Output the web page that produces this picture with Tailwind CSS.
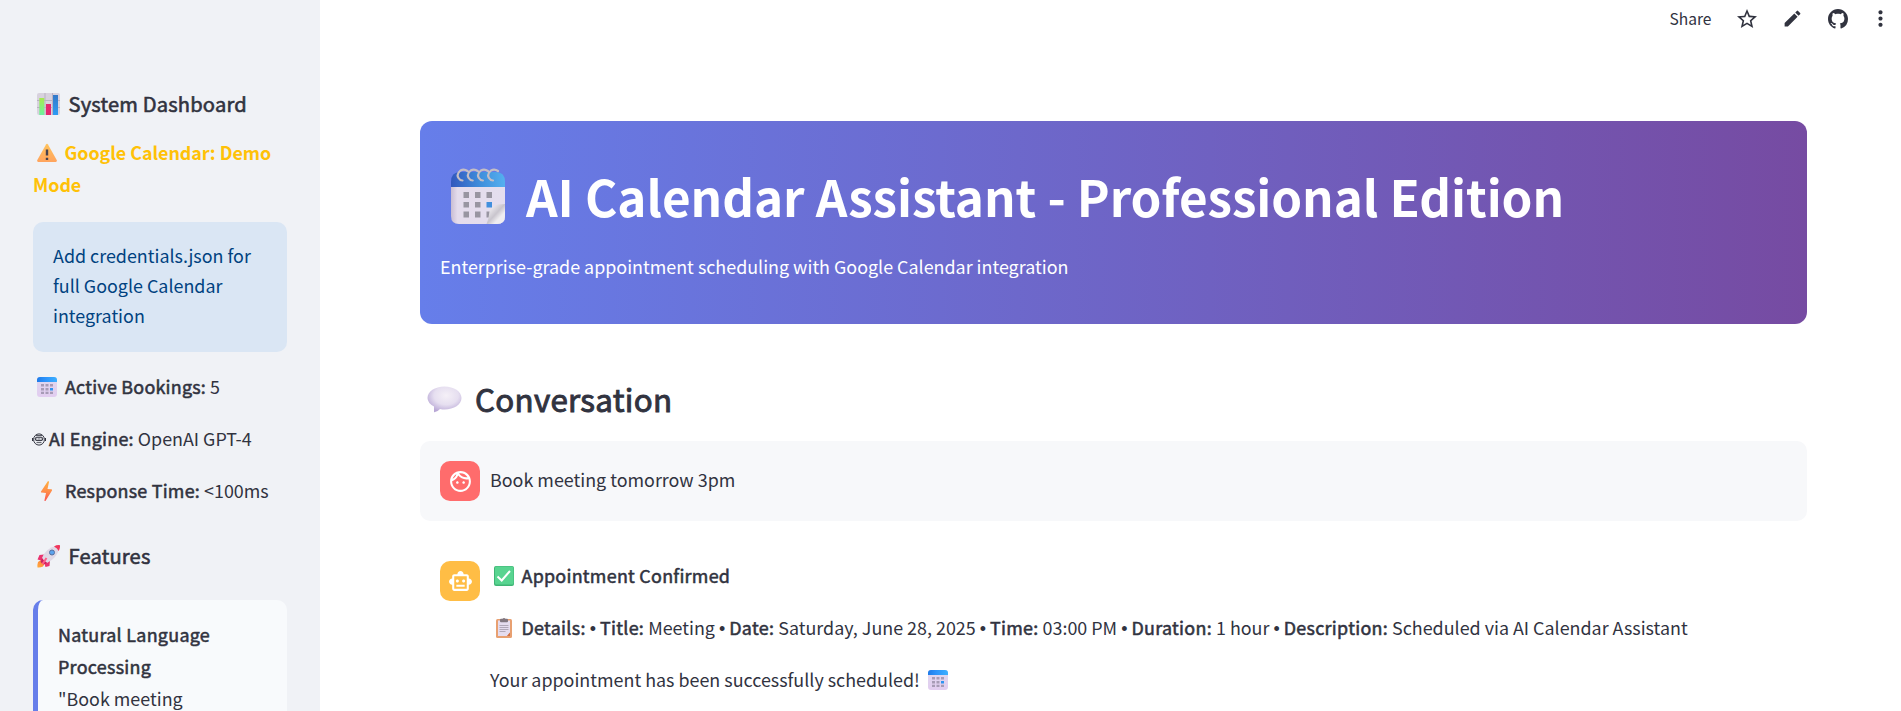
<!DOCTYPE html>
<html lang="en">
<head>
<meta charset="utf-8">
<title>AI Calendar Assistant</title>
<script src="https://cdn.jsdelivr.net/npm/@tailwindcss/browser@4"></script>
</head>
<body class="h-[711px] w-[1901px] overflow-hidden bg-white font-['Noto_Sans_CJK_SC',sans-serif] text-[17.9px] text-[#31333f]">
<svg class="absolute size-0" aria-hidden="true">
  <defs>
    <linearGradient id="blueTop" x1="0" x2="1"><stop offset="0" stop-color="#1f7be8"/><stop offset=".4" stop-color="#2c92fa"/><stop offset="1" stop-color="#3cb0ff"/></linearGradient>
    <linearGradient id="lilac" x1="0" y1="0" x2="0" y2="1"><stop offset="0" stop-color="#dfd8ee"/><stop offset="1" stop-color="#e2cdf0"/></linearGradient>
    <linearGradient id="padTop" x1="0" x2="1"><stop offset="0" stop-color="#3157bd"/><stop offset=".55" stop-color="#3f8fdc"/><stop offset="1" stop-color="#55b0ef"/></linearGradient>
    <linearGradient id="padBody" x1="0" x2="1"><stop offset="0" stop-color="#c9bdd3"/><stop offset=".12" stop-color="#e4dcec"/><stop offset="1" stop-color="#e4deee"/></linearGradient>
    <linearGradient id="curl" x1="0" y1="0" x2="1" y2="1"><stop offset=".25" stop-color="#e6e3e8"/><stop offset=".5" stop-color="#c9c5cd"/><stop offset=".7" stop-color="#efedf0"/></linearGradient>
    <linearGradient id="barG" x1="0" y1="0" x2="0" y2="1"><stop offset="0" stop-color="#a6e84f"/><stop offset="1" stop-color="#6df2a0"/></linearGradient>
    <linearGradient id="barB" x1="0" y1="0" x2="0" y2="1"><stop offset="0" stop-color="#3478c8"/><stop offset="1" stop-color="#2f9cf4"/></linearGradient>
    <linearGradient id="warn" x1="0" y1="0" x2="0" y2="1"><stop offset="0" stop-color="#ffc35c"/><stop offset="1" stop-color="#ffa45e"/></linearGradient>
    <linearGradient id="bolt" x1="0" y1="0" x2="0" y2="1"><stop offset="0" stop-color="#ffb03f"/><stop offset=".5" stop-color="#ff8f4a"/><stop offset="1" stop-color="#f9544f"/></linearGradient>
    <linearGradient id="flame" x1="1" y1="0" x2="0" y2="1"><stop offset="0" stop-color="#ff7a3c"/><stop offset="1" stop-color="#ffab3d"/></linearGradient>
    <radialGradient id="bubble" cx=".55" cy=".35" r=".65"><stop offset="0" stop-color="#f5f0f7"/><stop offset=".55" stop-color="#e6dff0"/><stop offset="1" stop-color="#b9a8d6"/></radialGradient>
    <symbol id="calendar" viewBox="0 0 20 20">
      <rect width="20" height="20" rx="3" fill="url(#lilac)"/>
      <path d="M0 5V3a3 3 0 0 1 3-3h14a3 3 0 0 1 3 3v2z" fill="url(#blueTop)"/>
      <path d="M4 7h3v2.500H4zM8.500 7h3v2.500h-3zM13 7h3v2.500h-3zM4 11h3v2.500H4zM8.500 11h3v2.500h-3zM4 14.700h3v2.300H4zM8.500 14.700h3v2.300h-3zM13 14.700h3v2.300h-3z" fill="#a79bb6"/>
      <path d="M13 11h3v2.500h-3z" fill="#2f94f0"/>
    </symbol>
  </defs>
</svg>

<div class="flex h-full">
  <aside class="w-[320px] shrink-0 overflow-hidden bg-[#f0f2f6] pl-[33px] pr-[33px] pt-[89px] whitespace-nowrap">
    <h3 class="flex h-[30px] items-center text-[20.1px] font-normal tracking-[0.19px] [-webkit-text-stroke:0.6px] leading-[30px]">
      <svg class="ml-1 mr-[8.500px] h-[22px] w-[23px]" viewBox="0 0 23 22"><rect width="23" height="22" rx="2" fill="#d8d2de"/><path d="M0 7.500h23M0 14.500h23M8 0v22M15.500 0v22" stroke="#b9b2c2"/><rect x="2.300" y="5" width="5" height="17" fill="url(#barG)"/><rect x="9" y="11" width="5" height="11" fill="#e5266f"/><rect x="16" y="2" width="5" height="20" fill="url(#barB)"/></svg>
      <span>System Dashboard</span>
    </h3>
    <div class="mt-[18px] font-bold leading-8 tracking-[-0.04px] text-[#ffc107]">
      <div class="flex h-8 items-center">
        <svg class="ml-[3.5px] mr-2 size-5" viewBox="0 0 20 20"><path d="M9 1.500a1.200 1.200 0 0 1 2 0l8.800 15.700q.4 1.300-1 1.800H1.200q-1.400-.5-1-1.800z" fill="url(#warn)"/><path d="M10 6.500v6M10 14.800v2.200" stroke="#46424e" stroke-width="2.400"/></svg>
        <span class="-mt-0.5">Google Calendar: Demo</span>
      </div>
      <div class="-mt-px"><span>Mode</span></div>
    </div>
    <div class="mt-[22px] h-[130px] rounded-[10px] bg-[#dae6f4] px-5 pt-[18px] leading-[30px] text-[#004280]">
      <div><span>Add credentials.json for</span></div>
      <div><span>full Google Calendar</span></div>
      <div><span>integration</span></div>
    </div>
    <div class="mt-[19px] flex h-8 items-center leading-8">
      <svg class="ml-1 mr-2 size-5"><use href="#calendar"/></svg>
      <p class="-mt-0.5"><b class="font-normal tracking-[0.24px] [-webkit-text-stroke:0.55px]">Active Bookings:</b> 5</p>
    </div>
    <div class="mt-5 flex h-8 items-center leading-8">
      <svg class="-ml-px mr-[3px] h-[13px] w-[14px]" viewBox="0 0 14 13" fill="none" stroke="#31333f"><ellipse cx="7" cy="6.500" rx="5.400" ry="5.600"/><path d="M.5 5v3M13.500 5v3" /><rect x="3.200" y="4.200" width="7.600" height="3.400" rx="1.700" fill="#31333f" fill-opacity=".35"/><path d="M5 5.900h1M8 5.900h1" stroke="#f0f2f6"/><path d="M4.500 9.600h5M4 2.500h6" stroke-width=".8"/></svg>
      <p class="-mt-0.5"><b class="font-normal tracking-[0.24px] [-webkit-text-stroke:0.55px]">AI Engine:</b> OpenAI GPT-4</p>
    </div>
    <div class="mt-5 flex h-8 items-center leading-8">
      <svg class="ml-1 mr-2 size-5" viewBox="0 0 20 20"><path d="M11 0 4 10.500q-.3 1 .6 1.100L9 12l-1.600 7.500q.6 1 1.400 0L15 9.500q.3-1.100-.7-1.200L10.500 8 12 1q-.2-1-1-1z" fill="url(#bolt)"/></svg>
      <p class="-mt-0.5"><b class="font-normal tracking-[0.24px] [-webkit-text-stroke:0.55px]">Response Time:</b> &lt;100ms</p>
    </div>
    <h3 class="mt-[34px] flex h-[30px] items-center text-[20.1px] font-normal tracking-[0.19px] [-webkit-text-stroke:0.6px] leading-[30px]">
      <svg class="ml-1 mr-[8.500px] size-[23px]" viewBox="0 0 23 23"><path d="M1 17Q0 20 .5 22.500q3 .3 5.500-1l2-3.500-4-3z" fill="url(#flame)"/><path d="M7 9.500 2.500 10 .5 14.500 6 16zM13 15.500 12.500 21 8.500 22 7 17z" fill="#e9336f"/><path d="M5 13Q9 3 19 1l3 3Q20 13 10 18z" fill="#dfd8e6"/><path d="M17 1.500Q20-.3 23 .2q.3 3-1.300 5.800Q20.500 3 17 1.500z" fill="#f0365c"/><path d="M5 13.500 3.500 17l3 2.500L10 18z" fill="#c9245c"/><path d="M9.500 13 5.500 19" stroke="#ff5c87" stroke-width="2"/><circle cx="15" cy="7.500" r="2.500" fill="#5ba3ee" stroke="#586f9e"/></svg>
      <span>Features</span>
    </h3>
    <div class="mt-[29px] h-[170px] rounded-[10px] border-l-[5px] border-[#667eea] bg-[#f8fafc] pl-5 pt-[18px] leading-8">
      <div class="font-normal tracking-[0.29px] [-webkit-text-stroke:0.55px]"><span>Natural Language</span></div>
      <div class="font-normal tracking-[0.29px] [-webkit-text-stroke:0.55px]"><span>Processing</span></div>
      <div><span>"Book meeting</span></div>
    </div>
  </aside>

  <main class="flex min-w-0 flex-1 flex-col whitespace-nowrap">
    <header class="flex h-[37px] shrink-0 items-center justify-end pr-[8px]">
      <span class="mr-[23.5px] -mt-px text-[15.6px] leading-6">Share</span>
      <svg class="mr-[23px] size-6" viewBox="0 0 24 24" fill="#31333f"><path d="M22 9.240l-7.190-.62L12 2 9.190 8.630 2 9.240l5.460 4.730L5.820 21 12 17.270 18.180 21l-1.630-7.030L22 9.240zM12 15.400l-3.760 2.270 1-4.280-3.320-2.880 4.380-.38L12 6.100l1.710 4.040 4.380.38-3.320 2.880 1 4.280L12 15.400z"/></svg>
      <svg class="mr-[25px] size-[21px]" viewBox="0 0 24 24" fill="#31333f"><path d="M3 17.250V21h3.750L17.810 9.940l-3.750-3.750L3 17.250zM20.710 7.040a1 1 0 0 0 0-1.410l-2.340-2.340a1 1 0 0 0-1.410 0l-1.830 1.830 3.750 3.750 1.830-1.830z"/></svg>
      <svg class="mr-5 size-5" viewBox="0 0 16 16" fill="#31333f"><path d="M8 0C3.580 0 0 3.580 0 8c0 3.540 2.290 6.530 5.470 7.590.4.070.55-.17.55-.38 0-.19-.01-.82-.01-1.490-2.010.37-2.530-.49-2.690-.94-.09-.23-.48-.94-.82-1.130-.28-.15-.68-.52-.01-.53.63-.01 1.080.58 1.230.82.72 1.210 1.870.87 2.330.66.07-.52.28-.87.51-1.070-1.780-.2-3.640-.89-3.640-3.950 0-.87.31-1.590.82-2.150-.08-.2-.36-1.020.08-2.120 0 0 .67-.21 2.200.82.640-.18 1.320-.27 2-.27s1.360.09 2 .27c1.530-1.040 2.200-.82 2.200-.82.44 1.100.16 1.920.08 2.120.51.56.82 1.270.82 2.150 0 3.070-1.870 3.750-3.650 3.950.29.25.54.73.54 1.480 0 1.070-.01 1.930-.01 2.200 0 .21.15.46.55.38A8.010 8.010 0 0 0 16 8c0-4.420-3.580-8-8-8z"/></svg>
      <svg class="size-[25px]" viewBox="0 0 24 24" fill="#31333f"><path d="M12 8c1.100 0 2-.9 2-2s-.9-2-2-2-2 .9-2 2 .9 2 2 2zm0 2c-1.100 0-2 .9-2 2s.9 2 2 2 2-.9 2-2-.9-2-2-2zm0 6c-1.100 0-2 .9-2 2s.9 2 2 2 2-.9 2-2-.9-2-2-2z"/></svg>
    </header>

    <div class="ml-[100px] mt-[84px] w-[1387px]">
      <section class="h-[203px] rounded-[12px] bg-[linear-gradient(90deg,#667eea_0%,#764ba2_100%)] px-5 pt-[43px] text-white">
        <h1 class="flex h-[66px] items-center text-[49.4px] font-bold leading-[66px] tracking-[-0.06px]">
          <svg class="-mt-0.5 ml-[11px] mr-[21px] h-[56px] w-[54px]" viewBox="0 0 54 56"><path d="M0 18h54v30q0 8-8 8H8q-8 0-8-8z" fill="url(#padBody)"/><path d="M0 19v-5Q0 4 9 4h36q9 0 9 10v5z" fill="url(#padTop)"/><path d="M12.500 24h5.500v6h-5.500zM24 24h5.500v6H24zM35.500 24H41v6h-5.500zM12.500 34h5.500v5.500h-5.500zM24 34h5.500v5.500H24zM12.500 43.500h5.500v6h-5.500zM24 43.500h5.500v6H24zM35.500 43.500H41v6h-5.500z" fill="#9895a1"/><path d="M35.500 34H41v5.500h-5.500z" fill="#418fdd"/><path d="M54 36v12q0 8-8 8H35.500Q38 50 38.500 43q3-5 8-6.500z" fill="url(#curl)"/><path d="M16.500 3Q13 .5 9.500 2.500 5 6 7.500 10q1.500 2.500 4 2.500M26.700 3q-3.500-2.500-7-.5-4.500 3.500-2 7.500 1.500 2.500 4 2.500M36.900 3q-3.500-2.500-7-.5-4.500 3.500-2 7.500 1.500 2.500 4 2.500M47 3q-3.500-2.500-7-.5-4.500 3.500-2 7.500 1.500 2.500 4 2.500" fill="none" stroke="#c5bec5" stroke-width="2.200" stroke-linecap="round"/></svg>
          <span class="-mt-0.5">AI Calendar Assistant - Professional Edition</span>
        </h1>
        <p class="mt-5 leading-8"><span>Enterprise-grade appointment scheduling with Google Calendar integration</span></p>
      </section>

      <h2 class="mt-[54px] flex h-[42px] items-center text-[31.3px] font-normal tracking-[0.3px] [-webkit-text-stroke:0.95px] leading-[42px]">
        <svg class="ml-[7px] mr-[13px] h-[27px] w-[35px]" viewBox="0 0 35 27"><path d="M17.500.5C27 .5 34.500 5.500 34.500 12S27 23.500 17.500 23.500q-2 0-4.500-.5-3 3.500-6 3.300L7 20.500Q.5 17 .5 12C.5 5.500 8 .5 17.500.5z" fill="url(#bubble)"/></svg>
        <span>Conversation</span>
      </h2>

      <section class="mt-[21px] flex h-20 items-center rounded-[10px] bg-[#f7f8fa] pl-5">
        <div class="mr-[10px] flex size-10 items-center justify-center rounded-[10px] bg-[#ff6c6c]">
          <svg class="size-[25px]" viewBox="0 0 24 24" fill="#fff"><path d="M10.250 13c0 .69-.56 1.250-1.250 1.250S7.750 13.690 7.750 13s.56-1.250 1.250-1.250 1.250.56 1.250 1.250zM15 11.750c-.69 0-1.250.56-1.250 1.250s.56 1.250 1.250 1.250 1.250-.56 1.250-1.250-.56-1.250-1.250-1.250zm7 .25c0 5.520-4.480 10-10 10S2 17.520 2 12 6.480 2 12 2s10 4.480 10 10zM10.660 4.120C12.060 6.440 14.600 8 17.500 8c.46 0 .91-.05 1.340-.12C17.440 5.560 14.900 4 12 4c-.46 0-.91.05-1.340.12zM4.420 9.470c1.710-.97 3.030-2.550 3.660-4.440C6.370 6 5.050 7.580 4.420 9.470zM20 12c0-.78-.12-1.530-.33-2.240-.7.15-1.420.24-2.170.24-3.130 0-5.920-1.440-7.760-3.690C8.690 8.870 6.600 10.880 4 11.860c.01.04 0 .09 0 .14 0 4.410 3.590 8 8 8s8-3.590 8-8z"/></svg>
        </div>
        <span class="-mt-1 leading-8">Book meeting tomorrow 3pm</span>
      </section>

      <section class="mt-10 flex pl-5">
        <div class="mr-[10px] flex size-10 items-center justify-center rounded-[10px] bg-[#ffbd45]">
          <svg class="size-[25px]" viewBox="0 0 24 24" fill="#fff"><path d="M20 9V7c0-1.100-.9-2-2-2h-3c0-1.660-1.340-3-3-3S9 3.340 9 5H6c-1.100 0-2 .9-2 2v2c-1.660 0-3 1.340-3 3s1.340 3 3 3v4c0 1.100.9 2 2 2h12c1.100 0 2-.9 2-2v-4c1.660 0 3-1.340 3-3s-1.340-3-3-3zM18 19H6V7h12v12zM9 13c-.83 0-1.500-.67-1.500-1.500S8.170 10 9 10s1.500.67 1.500 1.500S9.830 13 9 13zm7.500-1.500c0 .83-.67 1.500-1.500 1.500s-1.500-.67-1.500-1.500.67-1.500 1.500-1.500 1.500.67 1.500 1.500zM8 15h8v2H8v-2z"/></svg>
        </div>
        <div class="leading-8">
          <div class="flex h-8 items-center">
            <svg class="-mt-0.5 ml-1 mr-[7.5px] size-5" viewBox="0 0 20 20"><rect width="20" height="20" rx="2" fill="#3fb575"/><rect x="1" y=".5" width="18.500" height="18" rx="1.500" fill="#58d490"/><path d="m3.500 10.500 4.200 4L16 5" fill="none" stroke="#fff" stroke-width="2"/></svg>
            <b class="-mt-1 font-normal tracking-[0.27px] [-webkit-text-stroke:0.55px]">Appointment Confirmed</b>
          </div>
          <div class="mt-5 flex h-8 items-center">
            <svg class="-mt-0.5 ml-[6px] mr-[9.5px] h-5 w-4" viewBox="0 0 16 20"><rect y="1" width="16" height="19" rx="1.500" fill="#e8a071"/><path d="M2 2.500h12v12L11 18H2z" fill="#e5dcef"/><path d="M14 14.500V18h-3z" fill="#cf7048"/><rect x="4" y=".8" width="8" height="3.400" rx="1" fill="#81767f"/><circle cx="8" cy="1.500" r="1.500" fill="#81767f"/><path d="M3.500 7.500h9M3.500 9.500h9M3.500 11.500h9M3.500 13.500h6" stroke="#aaa1b2" stroke-width=".9"/></svg>
            <p class="-mt-1"><b class="font-normal tracking-[0.3px] [-webkit-text-stroke:0.55px]">Details:</b> <span class="font-['Liberation_Sans'] leading-none">•</span> <b class="font-normal tracking-[0.3px] [-webkit-text-stroke:0.55px]">Title:</b> Meeting <span class="font-['Liberation_Sans'] leading-none">•</span> <b class="font-normal tracking-[0.3px] [-webkit-text-stroke:0.55px]">Date:</b> Saturday, June 28, 2025 <span class="font-['Liberation_Sans'] leading-none">•</span> <b class="font-normal tracking-[0.3px] [-webkit-text-stroke:0.55px]">Time:</b> 03:00 PM <span class="font-['Liberation_Sans'] leading-none">•</span> <b class="font-normal tracking-[0.3px] [-webkit-text-stroke:0.55px]">Duration:</b> 1 hour <span class="font-['Liberation_Sans'] leading-none">•</span> <b class="font-normal tracking-[0.3px] [-webkit-text-stroke:0.55px]">Description:</b> Scheduled via AI Calendar Assistant</p>
          </div>
          <div class="mt-5 flex h-8 items-center">
            <span class="-mt-1">Your appointment has been successfully scheduled!</span>
            <svg class="-mt-0.5 ml-2 size-5"><use href="#calendar"/></svg>
          </div>
        </div>
      </section>
    </div>
  </main>
</div>
</body>
</html>
